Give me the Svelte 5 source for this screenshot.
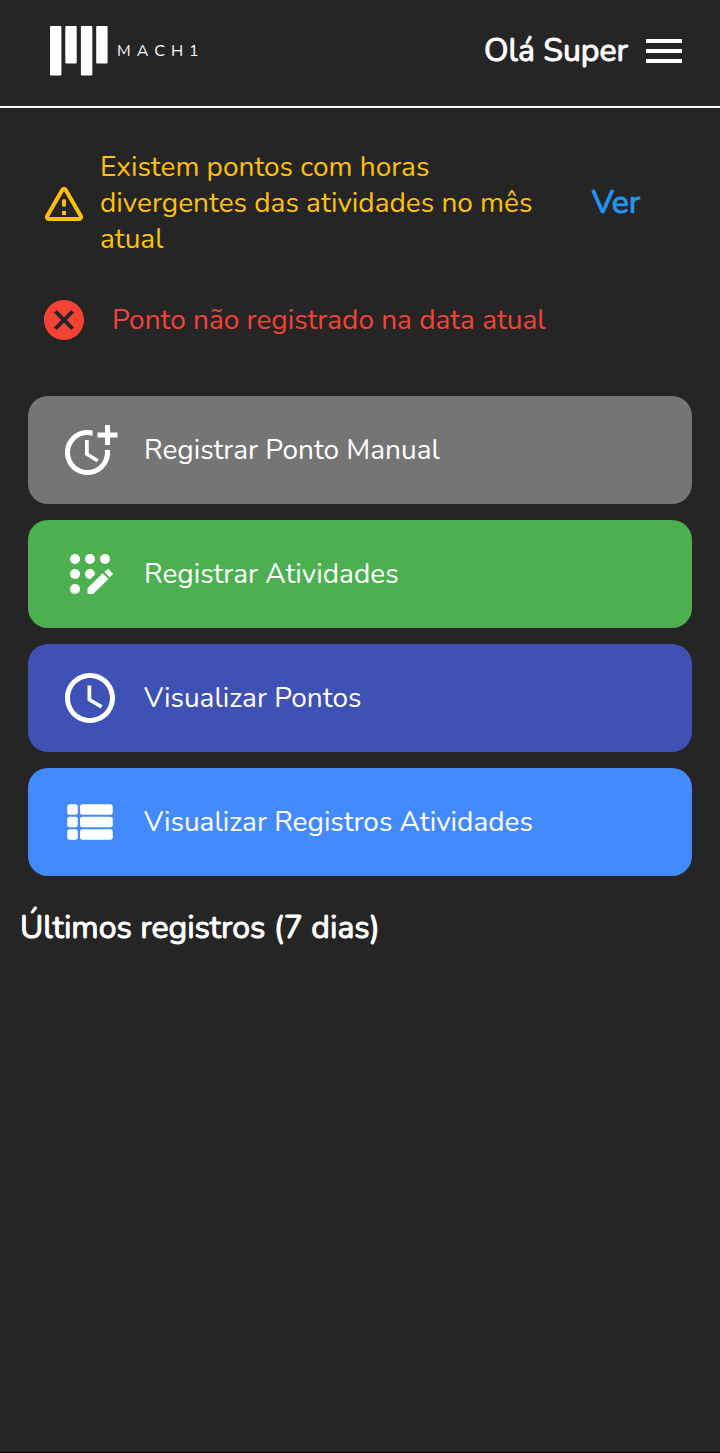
<script>
  const actions = [
    { label: 'Registrar Ponto Manual', icon: 'more-time', tone: 'grey' },
    { label: 'Registrar Atividades', icon: 'app-registration', tone: 'green' },
    { label: 'Visualizar Pontos', icon: 'clock', tone: 'indigo' },
    { label: 'Visualizar Registros Atividades', icon: 'list', tone: 'blue' },
  ];
</script>

<div class="page">
  <header>
    <a class="brand" href="#inicio">
      <svg viewBox="0 0 58 50" width="58" height="50" aria-hidden="true">
        <rect x="0" y="0" width="11.4" height="49.5" rx="1" />
        <rect x="15.3" y="0" width="11.4" height="37.4" rx="1" />
        <rect x="30.9" y="0" width="11.4" height="49.5" rx="1" />
        <rect x="46.2" y="0" width="11.4" height="37.4" rx="1" />
      </svg>
      <span>MACH1</span>
    </a>
    <div class="user">
      <span class="hello">Olá Super</span>
      <button class="menu" aria-label="Menu">
        <svg viewBox="0 0 24 24" width="48" height="48">
          <path d="M3 18h18v-2H3v2zm0-5h18v-2H3v2zm0-7v2h18V6H3z" />
        </svg>
      </button>
    </div>
  </header>

  <main>
    <section class="alerts">
      <div class="alert warning">
        <svg viewBox="0 0 24 24" width="48" height="48" aria-hidden="true">
          <path d="M12 5.99 19.53 19H4.47L12 5.99M2.74 18c-.77 1.33.19 3 1.73 3h15.06c1.54 0 2.5-1.67 1.73-3L13.73 4.99c-.77-1.33-2.69-1.33-3.46 0L2.74 18zM11 11v2c0 .55.45 1 1 1s1-.45 1-1v-2c0-.55-.45-1-1-1s-1 .45-1 1zm0 5h2v2h-2z" />
        </svg>
        <p>Existem pontos com horas divergentes das atividades no mês atual</p>
        <button class="see">Ver</button>
      </div>
      <div class="alert error">
        <svg viewBox="0 0 24 24" width="48" height="48" aria-hidden="true">
          <path d="M12 2C6.47 2 2 6.47 2 12s4.47 10 10 10 10-4.47 10-10S17.53 2 12 2zm5 13.59L15.59 17 12 13.41 8.41 17 7 15.59 10.59 12 7 8.41 8.41 7 12 10.59 15.59 7 17 8.41 13.41 12 17 15.59z" />
        </svg>
        <p>Ponto não registrado na data atual</p>
      </div>
    </section>

    <nav>
      {#each actions as action}
        <button class="action {action.tone}">
          <svg viewBox="0 0 24 24" width="60" height="60" aria-hidden="true">
            {#if action.icon === 'more-time'}
              <path d="M10 8v6l4.7 2.9.8-1.2-4-2.4V8z" />
              <path d="M17.92 12c.05.33.08.66.08 1 0 3.9-3.1 7-7 7s-7-3.1-7-7 3.1-7 7-7c.7 0 1.37.1 2 .29V4.23C12.36 4.08 11.69 4 11 4c-5 0-9 4-9 9s4 9 9 9 9-4 9-9c0-.34-.02-.67-.06-1h-2.02z" />
              <path d="M20 5V2h-2v3h-3v2h3v3h2V7h3V5z" />
            {:else if action.icon === 'app-registration'}
              <circle cx="6" cy="6" r="2" />
              <circle cx="12" cy="6" r="2" />
              <circle cx="18" cy="6" r="2" />
              <circle cx="6" cy="12" r="2" />
              <circle cx="6" cy="18" r="2" />
              <path d="M13.99 12.2c.01-.07.01-.13.01-.2 0-1.1-.9-2-2-2s-2 .9-2 2 .9 2 2 2c.07 0 .13 0 .2-.01z" />
              <path d="M11 17.8v1.7c0 .28.22.5.5.5h1.5c.13 0 .26-.05.35-.15l6.05-5.85-2.3-2.3-5.95 5.75c-.1.1-.15.22-.15.35z" />
              <path d="m20.95 11.56-1.41-1.41c-.2-.2-.51-.2-.71 0l-1.06 1.06 2.12 2.12 1.06-1.06c.2-.2.2-.51 0-.71z" />
            {:else if action.icon === 'clock'}
              <path d="M11.99 2C6.47 2 2 6.48 2 12s4.47 10 9.99 10C17.52 22 22 17.52 22 12S17.52 2 11.99 2zM12 20c-4.42 0-8-3.58-8-8s3.58-8 8-8 8 3.58 8 8-3.58 8-8 8zm.5-13H11v6l5.25 3.15.75-1.23-4.5-2.67z" />
            {:else}
              {#each [4.9, 9.9, 14.9] as y}
                <rect x="2.9" {y} width="4.2" height="4.2" rx="1" />
                <rect x="8" {y} width="13.1" height="4.2" rx="1" />
              {/each}
            {/if}
          </svg>
          <span>{action.label}</span>
        </button>
      {/each}
    </nav>

    <h2>Últimos registros (7 dias)</h2>
  </main>
</div>

<style>
  :global(body) {
    background: #252525;
  }

  .page {
    box-sizing: border-box;
    min-height: 100vh;
    border-bottom: 1px solid #000;
    background: #252525;
    color: #fff;
    font-family: Nunito, 'Open Sans', sans-serif;
    font-size: 28px;
    line-height: 36px;
  }

  svg {
    display: block;
    flex: none;
    fill: currentColor;
  }

  button {
    border: 0;
    padding: 0;
    background: none;
    color: inherit;
    font: inherit;
    cursor: pointer;
  }

  header {
    display: flex;
    align-items: center;
    justify-content: space-between;
    padding: 26px 32px 30px 50px;
    border-bottom: 2px solid #fff;
  }

  .brand {
    display: flex;
    align-items: center;
    gap: 9px;
    color: inherit;
    font-size: 16px;
    letter-spacing: 6px;
    text-decoration: none;
  }

  .user {
    display: flex;
    align-items: center;
    gap: 12px;
  }

  .hello,
  .see,
  h2 {
    font-size: 32px;
    font-weight: 400;
    -webkit-text-stroke: 1px currentColor;
  }

  main {
    padding: 41px 28px;
  }

  .alerts {
    display: flex;
    flex-direction: column;
    gap: 39px;
    padding: 0 4px 0 12px;
  }

  .alert {
    display: flex;
    align-items: center;
  }

  .alert p {
    flex: 1;
    margin: 0;
  }

  .warning {
    gap: 12px;
    color: #ffc107;
  }

  .error {
    gap: 24px;
    color: #f44336;
  }

  .see {
    flex: none;
    width: 144px;
    margin-left: -12px;
    color: #2196f3;
  }

  nav {
    display: flex;
    flex-direction: column;
    gap: 16px;
    margin-top: 52px;
  }

  .action {
    display: flex;
    align-items: center;
    gap: 24px;
    padding: 24px 32px;
    border-radius: 20px;
    text-align: left;
  }

  .grey {
    background: #757575;
  }

  .green {
    background: #4caf50;
  }

  .indigo {
    background: #3f51b5;
  }

  .blue {
    background: #448aff;
  }

  h2 {
    margin: 34px -8px 0;
  }
</style>
